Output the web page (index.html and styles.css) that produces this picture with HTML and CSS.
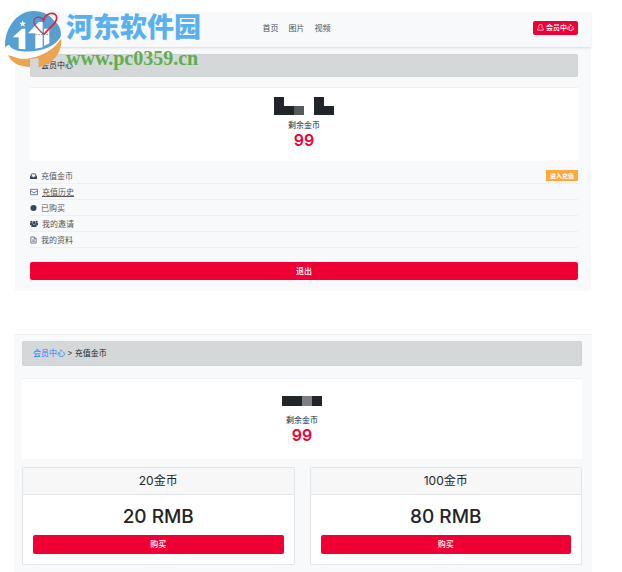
FILE: index.html
```
<!DOCTYPE html>
<html lang="zh-CN">
<head>
    <meta charset="UTF-8">
    <meta name="viewport" content="width=device-width, initial-scale=1.0">
    <title>会员中心</title>
    <link rel="stylesheet" href="styles.css">
</head>
<body>

<div class="watermark">
    <svg class="watermark-logo" viewBox="0 0 192 186">
        <!-- blue sky -->
        <path d="M10 122 C4 64 44 8 96 9 C122 9 142 20 154 36 C170 48 180 66 176 86 C160 116 112 134 62 130 C42 128 26 122 22 110 C14 112 10 116 10 122 Z" fill="#559fd2"/>
        <!-- orange ground -->
        <path d="M18 142 C60 154 136 140 178 92 C180 136 152 168 110 178 L110 150 L84 153 L84 178 L52 172 C36 166 24 154 18 142 Z" fill="#eda450"/>
        <path d="M54 148 L84 150 L84 178 L54 170 Z" fill="#eda450"/>
        <path d="M12 116 C20 144 82 146 122 128 C150 116 168 102 177 86 C172 112 126 146 74 152 C40 154 14 142 12 116 Z" fill="#fff"/>
        <!-- towers -->
        <path d="M32 88 L60 62 L70 62 L70 124 L50 122 L50 88 Z" fill="#fff"/>
        <path d="M78 76 L110 42 L122 42 L122 118 L100 122 L100 76 Z" fill="#fff"/>
        <path d="M126 62 L142 62 L142 106 L126 114 Z" fill="#fff"/>
        <path d="M62 37 L65 44 L72 44 L66 49 L69 56 L62 52 L55 56 L58 49 L52 44 L59 44 Z" fill="#fff"/>
        <!-- heart -->
        <path d="M126 42 C120 24 102 24 96 36 C92 50 108 62 126 80" fill="none" stroke="#a04664" stroke-width="4"/>
        <path d="M124 38 C130 14 162 8 164 28 C166 48 140 58 126 80" fill="none" stroke="#e81c2c" stroke-width="5"/>
        <path d="M93 80h74" fill="none" stroke="#8b929b" stroke-width="3" stroke-dasharray="5 3"/>
    </svg>
    <div class="watermark-text">
        <div class="watermark-name">河东软件园</div>
        <div class="watermark-url">www.pc0359.cn</div>
    </div>
</div>

<section class="panel member">
    <header class="topbar">
        <nav class="nav">
            <a href="#">首页</a>
            <a href="#">图片</a>
            <a href="#">视频</a>
        </nav>
        <button class="btn btn-user" type="button">
            <svg viewBox="0 0 16 16"><path d="M5 8C3 6 4 1 8 1s5 5 3 7M5 8C2 9 1 11 1 14h14c0-3-1-5-4-6" fill="none" stroke="#fff" stroke-width="1.5"/></svg>
            会员中心
        </button>
    </header>
    <div class="content">
        <div class="breadcrumb">会员中心</div>
        <div class="balance">
            <svg class="masked" viewBox="0 0 60 18"><path d="M0 0h10v9h10v9H0zM40 0h10v9h10v9H40z" fill="#212529"/><path d="M20 9h10v9H20z" fill="#55595c"/></svg>
            <p>剩余金币</p>
            <strong>99</strong>
        </div>
        <ul class="menu">
            <li>
                <svg viewBox="0 0 16 16"><path d="M4 2h8l4 7v6H0V9zM5 4L3 9h3l1 2h2l1-2h3l-2-5z" fill="#34495e" fill-rule="evenodd"/></svg>
                <a href="#">充值金币</a>
                <button class="recharge" type="button">进入充值</button>
            </li>
            <li>
                <svg class="wide" viewBox="0 0 18 16"><path d="M1 2h16v12H1zM1 5l8 5 8-5" fill="none" stroke="#5d7388" stroke-width="2"/></svg>
                <a class="underlined" href="#">充值历史</a>
            </li>
            <li>
                <svg viewBox="0 0 16 16"><circle cx="8" cy="8" r="7" fill="#34495e"/></svg>
                <a href="#">已购买</a>
            </li>
            <li>
                <svg class="wide" viewBox="0 0 18 16"><g fill="#34495e"><circle cx="3" cy="3" r="2.5"/><circle cx="15" cy="3" r="2.5"/><circle cx="9" cy="5" r="3.5"/><path d="M0 6h5l2 3-3 2H0zM18 6h-5l-2 3 3 2h4zM3 15c0-4 1-6 3-6h6c2 0 3 2 3 6z"/></g></svg>
                <a href="#">我的邀请</a>
            </li>
            <li>
                <svg viewBox="0 0 16 16"><path d="M2 1h8l4 4v10H2zM10 1v4h4M5 8h6M5 11h6" fill="none" stroke="#5d7388" stroke-width="2"/></svg>
                <a href="#">我的资料</a>
            </li>
        </ul>
        <button class="btn btn-block" type="button">退出</button>
    </div>
</section>

<section class="panel coins">
    <div class="breadcrumb"><a href="#">会员中心</a> &gt; 充值金币</div>
    <div class="balance">
        <svg class="masked" viewBox="0 0 40 10"><path d="M0 0h20v10H0zM30 0h10v10H30z" fill="#212529"/><path d="M20 0h10v10H20z" fill="#7d7f82"/></svg>
        <p>剩余金币</p>
        <strong>99</strong>
    </div>
    <div class="cards">
        <div class="card">
            <h4>20金币</h4>
            <div class="card-body">
                <h1>20 RMB</h1>
                <button class="btn btn-block" type="button">购买</button>
            </div>
        </div>
        <div class="card">
            <h4>100金币</h4>
            <div class="card-body">
                <h1>80 RMB</h1>
                <button class="btn btn-block" type="button">购买</button>
            </div>
        </div>
    </div>
</section>

</body>
</html>
```
FILE: styles.css
```
* {
    margin: 0;
    padding: 0;
    box-sizing: border-box;
}

body {
    font-family: Inter, "Noto Sans CJK SC", sans-serif;
    font-size: 8px;
    line-height: 12px;
    color: #212529;
    background: #fff;
    padding: 12px 30px 0 14px;
}

a {
    color: inherit;
    text-decoration: none;
}

button {
    font-family: inherit;
    border: none;
    cursor: pointer;
}

.panel {
    background: #f8f9fb;
}

.member {
    margin: 0 1px 43px;
    padding-bottom: 11px;
}

.topbar {
    display: grid;
    grid-template-columns: 1fr auto 1fr;
    align-items: center;
    height: 35px;
    padding: 0 13px 4px 15px;
    box-shadow: 0 1px 2px rgba(0, 0, 0, 0.12);
}

.nav {
    grid-column: 2;
    display: flex;
    gap: 10px;
    padding-right: 15px;
    color: #4b5157;
}

.btn {
    background: #ef0034;
    color: #fff;
    border-radius: 2px;
    font-size: 8px;
    line-height: 12px;
    font-weight: 500;
}

.btn-user {
    justify-self: end;
    display: flex;
    align-items: center;
    gap: 2px;
    padding: 1px 4px;
    font-size: 7px;
}

.btn-user svg {
    width: 7px;
    height: 7px;
}

.btn-block {
    display: block;
    width: 100%;
    padding: 3px;
}

.content {
    padding: 7px 13px 0 15px;
}

.breadcrumb {
    padding: 5px 10px;
    background: #d4d8d9;
    border: 1px solid #d0d3d4;
    border-radius: 2px;
}

.breadcrumb a {
    color: #1a7cff;
}

.member .breadcrumb {
    line-height: 11px;
}

.balance {
    display: flex;
    flex-direction: column;
    align-items: center;
    background: #fff;
    border-top: 1px solid #eef0f1;
}

.balance strong {
    color: #ef0034;
    font-size: 16px;
    line-height: 18px;
    font-weight: 600;
}

.member .balance {
    margin: 10px 0 7px;
    padding: 9px 0 12px;
}

.member .masked {
    width: 60px;
    height: 18px;
    margin-bottom: 4px;
}

.menu {
    list-style: none;
    margin-bottom: 14px;
    color: #555;
}

.menu li {
    display: flex;
    align-items: center;
    gap: 4px;
    height: 16px;
    border-bottom: 1px solid #edeff1;
}

.menu svg {
    width: 7px;
    height: 8px;
}

.menu .wide {
    width: 8px;
}

.menu .underlined {
    text-decoration: underline;
}

.recharge {
    margin-left: auto;
    padding: 0 4px;
    background: #ffa83c;
    color: #fff;
    font-size: 6px;
    line-height: 11px;
    font-weight: 600;
}

.coins {
    padding: 6px 10px 12px 8px;
    border-top: 1px solid #eef0f1;
}

.coins .breadcrumb {
    padding: 6px 10px;
    line-height: 11px;
}

.coins .balance {
    margin: 12px 0 8px;
    padding: 17px 0 15px;
}

.coins .masked {
    width: 40px;
    height: 10px;
    margin-bottom: 8px;
}

.cards {
    display: grid;
    grid-template-columns: 1fr 1fr;
    gap: 15px;
}

.card {
    background: #fff;
    border: 1px solid #e4e5e6;
    border-radius: 2px;
    text-align: center;
}

.card h4 {
    padding: 4px;
    background: #f7f7f7;
    border-bottom: 1px solid #e4e5e6;
    font-size: 12px;
    line-height: 18px;
    font-weight: 400;
}

.card-body {
    padding: 10px;
}

.card-body h1 {
    margin-bottom: 6px;
    font-size: 19px;
    line-height: 24px;
    font-weight: 500;
}

.card-body .btn {
    line-height: 13px;
}

/* site mark that floats over the page */
.watermark {
    position: absolute;
    top: 8px;
    left: 2px;
    display: flex;
}

.watermark-logo {
    width: 64px;
    height: 62px;
}

.watermark-name {
    color: #58b0f0;
    font-size: 27px;
    line-height: 40px;
    font-weight: 900;
}

.watermark-url {
    color: #5fae4c;
    font-family: "Liberation Serif", serif;
    font-size: 20px;
    line-height: 20px;
    font-weight: 700;
}
```
